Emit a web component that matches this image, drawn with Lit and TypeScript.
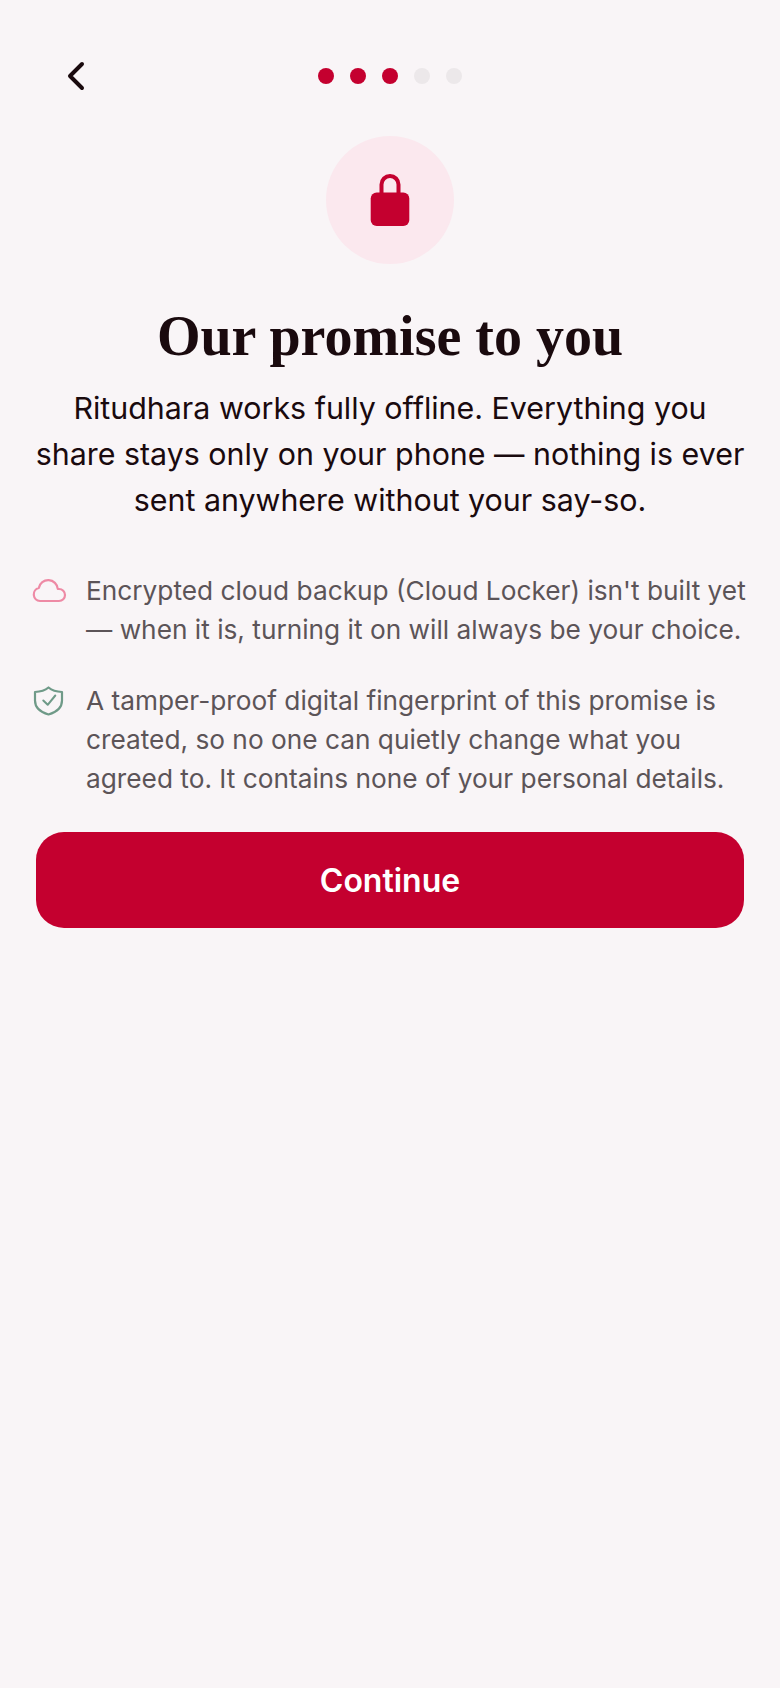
import { LitElement, css, html } from 'lit'
import { customElement } from 'lit/decorators.js'

@customElement('app-root')
export class AppRoot extends LitElement {
  render() {
    const dots = [true, true, true, false, false]
    return html`
      <div class="top">
        <button class="back" aria-label="Back">
          <svg width="48" height="48" viewBox="0 0 48 48" fill="none">
            <path d="M30 12 L18 24 L30 36" stroke="#1a0a0e" stroke-width="4" stroke-linecap="round" stroke-linejoin="round" />
          </svg>
        </button>
        <div class="dots">
          ${dots.map(on => html`<span class="dot ${on ? 'on' : ''}"></span>`)}
        </div>
      </div>

      <div class="badge">
        <svg width="40" height="54" viewBox="0 0 40 54" fill="none">
          <path d="M11.5 22 V11.5 a8.5 8.5 0 0 1 17 0 V22" stroke="#c4002f" stroke-width="4" />
          <rect x="0.7" y="19.6" width="38.6" height="33.4" rx="6" fill="#c4002f" />
        </svg>
      </div>

      <h1>Our promise to you</h1>
      <p class="lead">
        Ritudhara works fully offline. Everything you share stays only on your phone — nothing is ever sent anywhere without your say-so.
      </p>

      <div class="items">
        <div class="item">
          <svg class="ico" width="36" height="36" viewBox="0 0 36 36" fill="none">
            <path d="M8 28 H27 A6 6 0 0 0 27 16 L25.8 16 A9.6 9.6 0 0 0 6.8 15 A6.6 6.6 0 0 0 8 28 Z" stroke="#ee8aa5" stroke-width="2.2" stroke-linejoin="round" />
          </svg>
          <p>Encrypted cloud backup (Cloud Locker) isn't built yet — when it is, turning it on will always be your choice.</p>
        </div>
        <div class="item">
          <svg class="ico" width="36" height="36" viewBox="0 0 36 36" fill="none">
            <path d="M16.5 4.5 C19.5 7 25 8.8 30 9 V17.5 C30 24.5 24.5 29.2 16.5 31.5 C8.5 29.2 3 24.5 3 17.5 V9 C8 8.8 13.5 7 16.5 4.5 Z" stroke="#6f9a88" stroke-width="2.2" stroke-linejoin="round" />
            <path d="M11.3 17.5 L15.7 21.8 L23.3 12.5" stroke="#6f9a88" stroke-width="2" stroke-linecap="round" stroke-linejoin="round" />
          </svg>
          <p>A tamper-proof digital fingerprint of this promise is created, so no one can quietly change what you agreed to. It contains none of your personal details.</p>
        </div>
      </div>

      <button class="cta">Continue</button>
    `
  }

  static styles = css`
    :host {
      display: flex;
      flex-direction: column;
      box-sizing: border-box;
      width: 780px;
      height: 1688px;
      padding: 52px 36px 0;
      background: #f9f5f7;
      font-family: Inter, sans-serif;
      color: #1a0a0e;
    }

    .top {
      position: relative;
      display: flex;
      justify-content: center;
      align-items: center;
      height: 48px;
    }

    .back {
      position: absolute;
      left: 16px;
      top: 0;
      width: 48px;
      height: 48px;
      padding: 0;
      border: none;
      background: none;
    }

    .back svg {
      display: block;
    }

    .dots {
      display: flex;
      gap: 16px;
    }

    .dot {
      width: 16px;
      height: 16px;
      border-radius: 50%;
      background: #ece8ea;
    }

    .dot.on {
      background: #c4002f;
    }

    .badge {
      display: flex;
      align-items: center;
      justify-content: center;
      align-self: center;
      width: 128px;
      height: 128px;
      margin-top: 36px;
      border-radius: 50%;
      background: #fbe8ee;
    }

    h1 {
      margin: 36px 0 0;
      font-family: 'Liberation Serif', serif;
      font-size: 56px;
      font-weight: 700;
      line-height: 72px;
      text-align: center;
      color: #1a0a0e;
    }

    .lead {
      margin: 13px -6px 0;
      font-size: 30.4px;
      line-height: 46px;
      text-align: center;
    }

    .items {
      display: flex;
      flex-direction: column;
      gap: 32px;
      margin: 48px -8px 0 -4px;
    }

    .item {
      display: flex;
      gap: 18px;
    }

    .ico {
      flex: none;
      margin-top: 2px;
    }

    .item p {
      margin: 0;
      font-size: 26.25px;
      line-height: 39px;
      color: #5c5458;
    }

    .cta {
      margin-top: 34px;
      height: 96px;
      border: none;
      border-radius: 28px;
      background: #c4002f;
      color: #fff;
      font-family: inherit;
      font-size: 32px;
      font-weight: 600;
    }
  `
}
